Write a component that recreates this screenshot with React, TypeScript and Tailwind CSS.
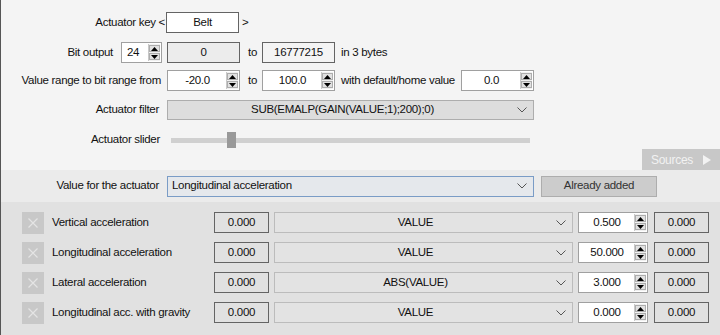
import React from 'react'

const font = { fontFamily: '"Liberation Sans", Arial, sans-serif' }

function Arrows() {
  return (
    <div className="flex h-full w-[12px] flex-col gap-px border-l border-[#c8c8c8] bg-[#f0f0f0] py-px">
      <div className="flex flex-1 items-center justify-center border border-[#adadad] bg-[#e1e1e1]">
        <svg width="7" height="4" viewBox="0 0 7 4">
          <path d="M3.5 0L7 4H0z" fill="#000" />
        </svg>
      </div>
      <div className="flex flex-1 items-center justify-center border border-[#adadad] bg-[#e1e1e1]">
        <svg width="7" height="4" viewBox="0 0 7 4">
          <path d="M0 0H7L3.5 4z" fill="#000" />
        </svg>
      </div>
    </div>
  )
}

function Spinner({ value, w, align = 'center' }: { value: string; w: string; align?: 'left' | 'center' }) {
  return (
    <div className={`flex h-[21px] ${w} items-stretch border border-[#a0a0a0] bg-white p-px`}>
      <div className={`flex flex-1 items-center ${align === 'center' ? 'justify-center' : 'pl-1'}`}>{value}</div>
      <Arrows />
    </div>
  )
}

function Chevron() {
  return (
    <svg width="10" height="6" viewBox="0 0 10 6" className="mr-[6px]">
      <path d="M0.5 0.5L5 5L9.5 0.5" fill="none" stroke="#555" strokeWidth="1" />
    </svg>
  )
}

const rows = [
  { name: 'Vertical acceleration', filter: 'VALUE', gain: '0.500' },
  { name: 'Longitudinal acceleration', filter: 'VALUE', gain: '50.000' },
  { name: 'Lateral acceleration', filter: 'ABS(VALUE)', gain: '3.000' },
  { name: 'Longitudinal acc. with gravity', filter: 'VALUE', gain: '0.000' },
]

export default function App() {
  return (
    <div
      className="flex h-[335px] w-[720px] flex-col overflow-hidden border-l border-[#555] text-[11.5px] tracking-[-0.3px] text-[#111]"
      style={font}
    >
      {/* actuator settings */}
      <div className="flex h-[170px] flex-col bg-[#f4f4f4] pt-[12px]">
        <div className="flex h-[21px] items-center">
          <div className="w-[165px] pr-[1px] text-right">Actuator key &lt;</div>
          <div className="flex h-[21px] w-[73px] items-center justify-center border border-[#646464] bg-white">Belt</div>
          <div className="ml-[3px]">&gt;</div>
        </div>

        <div className="mt-[9px] flex h-[21px] items-center">
          <div className="w-[112px] text-right">Bit output</div>
          <div className="ml-[8px]">
            <Spinner value="24" w="w-[41px]" align="left" />
          </div>
          <div className="ml-[5px] flex h-[21px] w-[73px] items-center justify-center border border-[#646464] bg-[#ececec]">0</div>
          <div className="ml-[8px] w-[14px]">to</div>
          <div className="flex h-[21px] w-[73px] items-center justify-center border border-[#646464] bg-[#f4f4f4]">16777215</div>
          <div className="ml-[6px]">in 3 bytes</div>
        </div>

        <div className="mt-[7px] flex h-[21px] items-center">
          <div className="w-[160px] text-right">Value range to bit range from</div>
          <div className="ml-[6px]">
            <Spinner value="-20.0" w="w-[73px]" />
          </div>
          <div className="ml-[8px] w-[14px]">to</div>
          <Spinner value="100.0" w="w-[73px]" />
          <div className="ml-[6px] w-[120px]">with default/home value</div>
          <Spinner value="0.0" w="w-[73px]" />
        </div>

        <div className="mt-[9px] flex h-[20px] items-center">
          <div className="w-[158px] text-right">Actuator filter</div>
          <div className="ml-[8px] flex h-[20px] w-[367px] items-center border border-[#adadad] bg-[#dddddd]">
            <div className="flex-1 text-center">SUB(EMALP(GAIN(VALUE;1);200);0)</div>
            <Chevron />
          </div>
        </div>

        <div className="mt-[11px] flex h-[18px] items-center">
          <div className="w-[159px] text-right">Actuator slider</div>
          <div className="relative ml-[11px] h-[5px] w-[359px] bg-[#d0d0d0]">
            <div className="absolute left-[56px] top-[-6px] h-[16px] w-[9px] bg-[#999999]" />
          </div>
        </div>

        <div className="mt-auto flex justify-end">
          <div className="flex h-[21px] w-[78px] items-center justify-center gap-[10px] bg-[#c8c8c8] text-[12px] text-[#f2f2f2]">
            <span>Sources</span>
            <svg width="8" height="10" viewBox="0 0 8 10">
              <path d="M0 0L8 5L0 10z" fill="#f2f2f2" />
            </svg>
          </div>
        </div>
      </div>

      {/* source picker */}
      <div className="flex h-[32px] items-center bg-[#ebebeb]">
        <div className="w-[158px] text-right">Value for the actuator</div>
        <div className="ml-[8px] flex h-[21px] w-[367px] items-center border border-[#7a9cc6] bg-[#e5e8ec]">
          <div className="flex-1 pl-[4px]">Longitudinal acceleration</div>
          <Chevron />
        </div>
        <div className="ml-[7px] flex h-[21px] w-[116px] items-center justify-center border border-[#adadad] bg-[#cccccc] text-[#333]">
          Already added
        </div>
      </div>

      {/* sources list */}
      <div className="flex flex-1 flex-col gap-[9px] bg-[#e1e1e1] pt-[10px]">
        {rows.map(r => (
          <div key={r.name} className="flex h-[21px] items-center">
            <div className="ml-[21px] flex h-[22px] w-[22px] items-center justify-center bg-[#c8c8c8]">
              <svg width="10" height="10" viewBox="0 0 10 10">
                <path d="M0.5 0.5L9.5 9.5M9.5 0.5L0.5 9.5" stroke="#e4e4e4" strokeWidth="1.2" />
              </svg>
            </div>
            <div className="ml-[8px] w-[162px]">{r.name}</div>
            <div className="flex h-[21px] w-[55px] items-center justify-center border border-[#646464]">0.000</div>
            <div className="ml-[5px] flex h-[21px] w-[299px] items-center border border-[#bcbcbc] bg-[#e3e3e3]">
              <div className="flex-1 text-center">{r.filter}</div>
              <Chevron />
            </div>
            <div className="ml-[5px]">
              <Spinner value={r.gain} w="w-[70px]" />
            </div>
            <div className="ml-[6px] flex h-[21px] w-[55px] items-center justify-center border border-[#646464]">0.000</div>
          </div>
        ))}
      </div>
    </div>
  )
}
